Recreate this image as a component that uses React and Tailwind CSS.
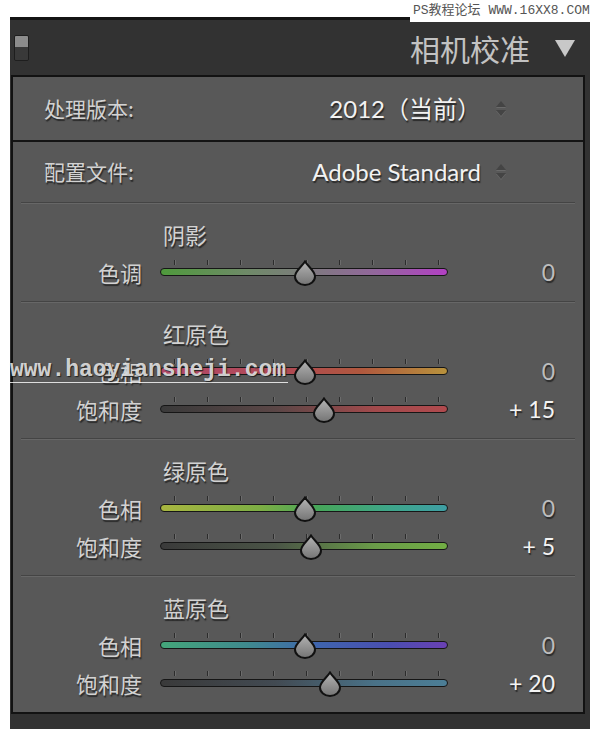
import React from "react";

const cjk = "font-['Noto_Sans_CJK_SC',sans-serif]";
const latin = "font-['Lato','Noto_Sans_CJK_SC',sans-serif]";
const shadow = "[text-shadow:1px_2px_1px_#2a2a2a]";

// 每一组滑块的数据
const sections = [
  {
    title: "阴影",
    rows: [
      {
        label: "色调",
        value: 0,
        track: "bg-[linear-gradient(90deg,#4f9a3c_0%,#6f8a68_30%,#7c7c7c_50%,#93679c_75%,#b240c4_100%)]",
      },
    ],
  },
  {
    title: "红原色",
    rows: [
      {
        label: "色相",
        value: 0,
        track: "bg-[linear-gradient(90deg,#b2486a_0%,#b04a52_45%,#b0583e_70%,#b8923c_100%)]",
      },
      {
        label: "饱和度",
        value: 15,
        track: "bg-[linear-gradient(90deg,#3a3a3a_0%,#5a4646_40%,#a24a4c_75%,#b04a4e_100%)]",
      },
    ],
  },
  {
    title: "绿原色",
    rows: [
      {
        label: "色相",
        value: 0,
        track: "bg-[linear-gradient(90deg,#a8b640_0%,#7cae44_35%,#46a65a_55%,#3ea68a_80%,#3e9ea4_100%)]",
      },
      {
        label: "饱和度",
        value: 5,
        track: "bg-[linear-gradient(90deg,#3a3a3a_0%,#4a5446_40%,#6a9c48_75%,#72ae44_100%)]",
      },
    ],
  },
  {
    title: "蓝原色",
    rows: [
      {
        label: "色相",
        value: 0,
        track: "bg-[linear-gradient(90deg,#44a67a_0%,#3f8a8e_30%,#3f64ae_55%,#4a4eb0_80%,#6a40b4_100%)]",
      },
      {
        label: "饱和度",
        value: 20,
        track: "bg-[linear-gradient(90deg,#3a3a3a_0%,#424a52_40%,#4a7288_75%,#4c7e96_100%)]",
      },
    ],
  },
];

const ticks = [14, 47, 80, 113, 146, 179, 212, 245, 278];

function Thumb({ value }) {
  const center = 145 + value * 1.25;
  return (
    <svg
      className="absolute top-[7px]"
      style={{ left: center - 12 }}
      width="24"
      height="26"
      viewBox="0 0 24 26"
    >
      <defs>
        <linearGradient id="thumbFill" x1="0" y1="0" x2="0" y2="1">
          <stop offset="0" stopColor="#b4b4b4" />
          <stop offset="1" stopColor="#747474" />
        </linearGradient>
      </defs>
      <path
        d="M12 1.5 C15 6.5 22 11 22 16.5 A10 8.5 0 0 1 2 16.5 C2 11 9 6.5 12 1.5 Z"
        fill="url(#thumbFill)"
        stroke="#111"
        strokeWidth="2"
      />
    </svg>
  );
}

function Slider({ value, track }) {
  return (
    <div className="relative w-[288px] h-[38px] shrink-0">
      {ticks.map((t) => (
        <span
          key={t}
          className="absolute top-[7px] h-[5px] w-px bg-[#2c2c2c] [box-shadow:1px_0_0_#6c6c6c]"
          style={{ left: t }}
        />
      ))}
      <div
        className={`absolute left-0 right-0 top-[15px] h-[8px] rounded-full border border-[#161616] ${track}`}
      />
      <Thumb value={value} />
    </div>
  );
}

function Stepper() {
  return (
    <svg width="12" height="20" viewBox="0 0 12 20" className="shrink-0">
      <path d="M6 2 L11 8 H1 Z" fill="#6a6a6a" transform="translate(0 1)" />
      <path d="M6 2 L11 8 H1 Z" fill="#444" />
      <path d="M1 11 H11 L6 17 Z" fill="#6a6a6a" transform="translate(0 1)" />
      <path d="M1 11 H11 L6 17 Z" fill="#444" />
    </svg>
  );
}

function Divider() {
  return <div className="mx-2 h-[2px] border-t border-[#444] border-b border-b-[#676767]" />;
}

export default function App() {
  return (
    <div className="relative min-h-screen bg-white">
      {/* 顶部水印 */}
      <div className="absolute right-[10px] top-0 h-[22px] w-[180px] bg-white pt-[4px] pl-[3px] text-[13px] leading-[14px] text-[#555] font-['Liberation_Mono','Noto_Sans_CJK_SC',monospace] whitespace-nowrap">
        PS教程论坛 WWW.16XX8.COM
      </div>

      <div className="pt-[17px] px-[10px]">
        <div className="bg-[#323232] border-t-[3px] border-[#141414]">
          {/* 标题栏 */}
          <div className="h-[55px] flex items-center pl-[4px] pr-[14px]">
            <div className="w-[15px] h-[26px] rounded-[2px] border border-[#1e1e1e] overflow-hidden flex flex-col">
              <div className="h-[11px] bg-[#8c8c8c]" />
              <div className="flex-1 bg-[#393939]" />
            </div>
            <div className={`ml-auto text-[30px] leading-none text-[#c2c2c2] ${cjk}`}>相机校准</div>
            <svg width="22" height="20" viewBox="0 0 22 20" className="ml-[24px]">
              <path d="M1 2 H21 L11 19 Z" fill="#c8c8c8" />
            </svg>
          </div>

          {/* 面板 */}
          <div className="ml-px mr-[5px] border-2 border-[#121212] bg-[#585858]">
            <div className="h-[63px] flex items-center pl-[31px] pr-[76px]">
              <span className={`text-[21px] text-[#d2d2d2] ${cjk} ${shadow}`}>处理版本:</span>
              <span className={`ml-auto text-[24px] text-[#f2f2f2] ${latin} ${shadow}`}>2012（当前）</span>
              <span className="ml-[14px]">
                <Stepper />
              </span>
            </div>
            <div className="h-[2px] bg-[#141414]" />
            <div className="h-[60px] flex items-center pl-[31px] pr-[76px]">
              <span className={`text-[21px] text-[#d2d2d2] ${cjk} ${shadow}`}>配置文件:</span>
              <span className={`ml-auto text-[24px] text-[#f2f2f2] ${latin} ${shadow}`}>Adobe Standard</span>
              <span className="ml-[14px]">
                <Stepper />
              </span>
            </div>

            {sections.map((sec) => (
              <div key={sec.title}>
                <Divider />
                <div className="pt-[15px] pb-[10px]">
                  <div className={`h-[30px] leading-[30px] pl-[150px] text-[22px] text-[#d2d2d2] ${cjk} ${shadow}`}>
                    {sec.title}
                  </div>
                  <div className="mt-1">
                    {sec.rows.map((row) => (
                      <div key={row.label} className="h-[38px] flex items-center">
                        <div className={`w-[129px] shrink-0 text-right text-[22px] text-[#d2d2d2] ${cjk} ${shadow}`}>
                          {row.label}
                        </div>
                        <div className="ml-[18px]">
                          <Slider value={row.value} track={row.track} />
                        </div>
                        <div
                          className={`w-[107px] shrink-0 text-right text-[23px] ${latin} ${shadow} ${
                            row.value === 0 ? "text-[#bdbdbd]" : "text-[#f4f4f4]"
                          }`}
                        >
                          {row.value === 0 ? "0" : `+ ${row.value}`}
                        </div>
                      </div>
                    ))}
                  </div>
                </div>
              </div>
            ))}
          </div>
          <div className="h-[15px]" />
        </div>
      </div>

      {/* 中间水印 */}
      <div className="absolute left-[10px] top-[359px] w-[278px] h-[24px] border-b border-white/80 text-[23px] leading-[22px] text-[#e6e6e6]/90 font-['Liberation_Mono',monospace] font-bold [text-shadow:1px_1px_1px_#222] whitespace-nowrap">
        www.haoyiansheji.com
      </div>
    </div>
  );
}
